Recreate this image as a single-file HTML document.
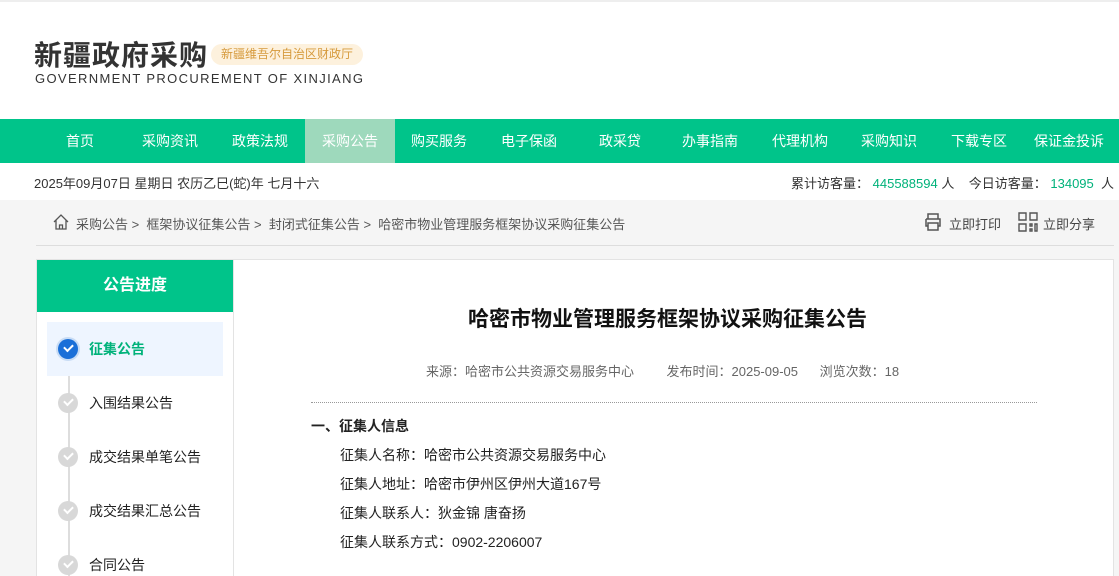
<!DOCTYPE html>
<html><head><meta charset="utf-8"><style>
*{margin:0;padding:0;box-sizing:border-box}
html,body{width:1119px;height:576px;overflow:hidden}
body{background:#f5f5f5;font-family:"Liberation Sans","Noto Sans CJK SC",sans-serif;position:relative}
.abs{position:absolute}
.top{left:0;top:0;width:1119px;height:119px;background:#fff;border-top:2px solid #eee}
.nav{left:0;top:119px;width:1119px;height:44px;background:#00c48a}
.nav span{position:absolute;top:0;height:44px;line-height:44px;width:90px;text-align:center;color:#fff;font-size:14px}
.date{left:0;top:163px;width:1119px;height:37px;background:#fff;font-size:13px;color:#333}
.g{color:#00b27a}
.left{left:36px;top:259px;width:198px;height:317px;background:#fff;border:1px solid #e3e3e3;border-bottom:none;overflow:hidden}
.right{left:233px;top:259px;width:881px;height:317px;background:#fff;border:1px solid #e3e3e3;border-bottom:none}
.step{position:absolute;left:10px;width:176px;height:54px;font-size:14px;color:#222}
.dot{position:absolute;left:11px;top:17px;width:20px;height:20px;border-radius:50%;background:#d8d8d8}
.dot:after{content:"";position:absolute;left:6px;top:5px;width:7px;height:4px;border-left:2px solid #fff;border-bottom:2px solid #fff;transform:rotate(-45deg)}
.step b{position:absolute;left:42px;top:17px;font-weight:normal}
.p{position:absolute;left:106px;font-size:14px;color:#222}
</style></head><body>
<div class="abs top">
 <div class="abs" style="left:34px;top:32px;font-size:28px;font-weight:bold;color:#333;letter-spacing:1px">新疆政府采购</div>
 <div class="abs" style="left:211px;top:42px;width:152px;height:21px;border-radius:11px;background:#fdf1dd;color:#d69a3c;font-size:12px;line-height:21px;text-align:center">新疆维吾尔自治区财政厅</div>
 <div class="abs" style="left:35px;top:69px;font-size:13px;color:#333;letter-spacing:1.35px">GOVERNMENT PROCUREMENT OF XINJIANG</div>
</div>
<div class="abs nav">
 <span style="left:35px">首页</span><span style="left:125px">采购资讯</span><span style="left:215px">政策法规</span><span style="left:305px;background:#9ed9bc">采购公告</span><span style="left:394px">购买服务</span><span style="left:484px">电子保函</span><span style="left:575px">政采贷</span><span style="left:665px">办事指南</span><span style="left:755px">代理机构</span><span style="left:844px">采购知识</span><span style="left:934px">下载专区</span><span style="left:1024px">保证金投诉</span>
</div>
<div class="abs date"><span class="abs" style="left:34px;top:10px">2025年09月07日 星期日 农历乙巳(蛇)年 七月十六</span>
<span class="abs" style="right:5px;top:10px">累计访客量：&nbsp;<span class="g">445588594</span> 人 &nbsp;&nbsp; 今日访客量：&nbsp;<span class="g">134095</span>&nbsp; 人</span></div>
<svg class="abs" style="left:52px;top:213px" width="18" height="18" viewBox="0 0 18 18"><path d="M2 9 9 2l7 7M4 7v9h10V7M7.5 16v-4h3v4" fill="none" stroke="#555" stroke-width="1.3"/></svg>
<div class="abs" style="left:76px;top:214px;font-size:13px;color:#555">采购公告 &gt;&nbsp; 框架协议征集公告 &gt;&nbsp; 封闭式征集公告 &gt;&nbsp; 哈密市物业管理服务框架协议采购征集公告</div>
<svg class="abs" style="left:923px;top:212px" width="20" height="20" viewBox="0 0 20 20"><path d="M5 7V2h10v5M3 7h14v7h-2M5 14H3V7M5 11h10v7H5z" fill="none" stroke="#555" stroke-width="1.5"/></svg>
<div class="abs" style="left:949px;top:214px;font-size:13px;color:#444">立即打印</div>
<svg class="abs" style="left:1018px;top:212px" width="20" height="20" viewBox="0 0 20 20"><path d="M1 1h7v7H1zM12 1h7v7h-7zM1 12h7v7H1zM12 12h2v2h-2zM17 12h2v7h-2zM12 17h2v2h-2z" fill="none" stroke="#555" stroke-width="1.4"/></svg>
<div class="abs" style="left:1043px;top:214px;font-size:13px;color:#444">立即分享</div>
<div class="abs" style="left:36px;top:245px;width:1078px;height:1px;background:#ddd"></div>
<div class="abs left">
 <div style="height:52px;background:#00c48a;color:#fff;font-size:16px;font-weight:bold;text-align:center;line-height:52px">公告进度</div>
 <div class="abs" style="left:31px;top:100px;width:2px;height:230px;background:#ddd"></div>
 <div class="step" style="top:62px;background:#eef5ff"><div class="dot" style="background:#1a6fd8;box-shadow:0 0 0 2px #c8dcf5"></div><b style="color:#00b27a;font-weight:bold">征集公告</b></div>
 <div class="step" style="top:116px"><div class="dot"></div><b>入围结果公告</b></div>
 <div class="step" style="top:170px"><div class="dot"></div><b>成交结果单笔公告</b></div>
 <div class="step" style="top:224px"><div class="dot"></div><b>成交结果汇总公告</b></div>
 <div class="step" style="top:278px"><div class="dot"></div><b>合同公告</b></div>
</div>
<div class="abs right">
 <div class="abs" style="left:-6px;width:879px;top:43px;text-align:center;font-size:21px;font-weight:bold;color:#111">哈密市物业管理服务框架协议采购征集公告</div>
 <div class="abs" style="left:192px;top:101px;font-size:13px;color:#666">来源：哈密市公共资源交易服务中心 &nbsp;&nbsp;&nbsp;&nbsp;&nbsp;&nbsp;&nbsp; 发布时间：2025-09-05 &nbsp;&nbsp;&nbsp;&nbsp; 浏览次数：18</div>
 <div class="abs" style="left:77px;top:142px;width:726px;border-top:1px dotted #999"></div>
 <div class="p" style="left:77px;top:156px;font-weight:bold">一、征集人信息</div>
 <div class="p" style="top:185px">征集人名称：哈密市公共资源交易服务中心</div>
 <div class="p" style="top:214px">征集人地址：哈密市伊州区伊州大道167号</div>
 <div class="p" style="top:243px">征集人联系人：狄金锦 唐奋扬</div>
 <div class="p" style="top:272px">征集人联系方式：0902-2206007</div>
</div>
</body></html>
